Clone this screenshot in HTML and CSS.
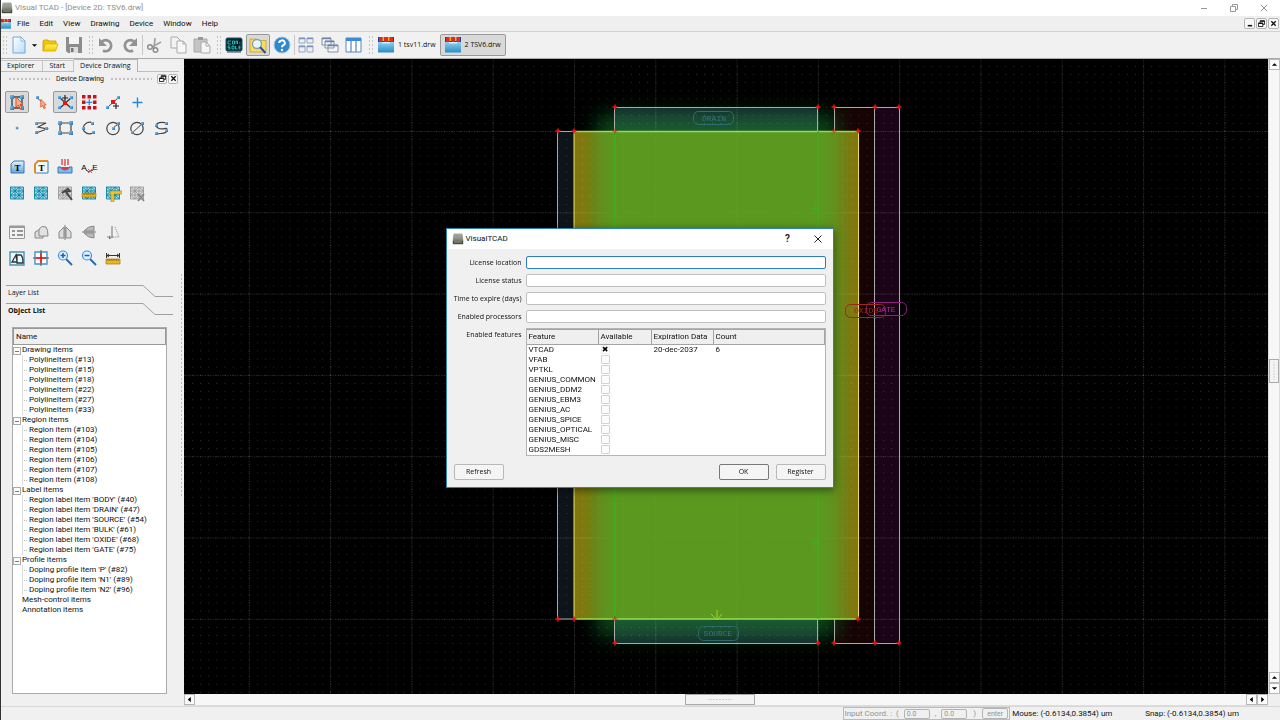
FILE: index.html
```html
<!DOCTYPE html>
<html lang="en">
<head>
<meta charset="utf-8">
<title>Visual TCAD - [Device 2D: TSV6.drw]</title>
<link rel="stylesheet" href="styles.css">
</head>
<body>
<svg class="defs" aria-hidden="true">
  <defs>
    <linearGradient id="gPage" x1="0" y1="0" x2="1" y2="1"><stop offset="0" stop-color="#fff"/><stop offset="1" stop-color="#b9dcf8"/></linearGradient>
    <linearGradient id="gNode" x1="0" y1="0" x2="1" y2="1"><stop offset="0" stop-color="#8cc8ee"/><stop offset="1" stop-color="#1f6fb4"/></linearGradient>
    <linearGradient id="gFolder" x1="0" y1="0" x2="0" y2="1"><stop offset="0" stop-color="#fff35a"/><stop offset="1" stop-color="#f2c800"/></linearGradient>
    <linearGradient id="gBlue" x1="0" y1="0" x2="0" y2="1"><stop offset="0" stop-color="#e6f3fb"/><stop offset="1" stop-color="#5fa3dc"/></linearGradient>
    <linearGradient id="gSea" x1="0" y1="0" x2="0" y2="1"><stop offset="0" stop-color="#8fd0f0"/><stop offset="1" stop-color="#2a8cc8"/></linearGradient>
    <linearGradient id="gApp" x1="0" y1="0" x2="0" y2="1"><stop offset="0" stop-color="#bfc2b8"/><stop offset="1" stop-color="#4e5248"/></linearGradient>
    <symbol id="app" viewBox="0 0 12 12"><path d="M2 1h8l1 7v3H1V8z" fill="url(#gApp)" stroke="#777" stroke-width=".6"/><path d="M3 2.500h6M3 4h6M2.500 5.500h7" stroke="#8d9288" stroke-width=".7"/><path d="M1 8h10v3H1z" fill="#44493f"/><path d="M2 9h8" stroke="#b7c59f" stroke-width=".8"/></symbol>
    <symbol id="dev" viewBox="0 0 16 16"><path d="M0 0h16v6H0z" fill="#2b3c8c"/><path d="M0 5h16v10.500H0z" fill="url(#gSea)"/><path d="M1 0h3.500v5H1zM6 0h4v5H6zM11.500 0H15v5h-3.500z" fill="#e02a1c"/><path d="M4.500 0H6v4H4.500zM10 0h1.500v4H10z" fill="#f8b030"/><path d="M4 5h8v1.500H4z" fill="#c8f0ff"/></symbol>
    <symbol id="new" viewBox="0 0 18 18"><path d="M3 1h8l4 4v12H3z" fill="url(#gPage)" stroke="#6fa8dc"/><path d="M11 1v4h4z" fill="#fff" stroke="#6fa8dc" stroke-width=".8"/></symbol>
    <symbol id="open" viewBox="0 0 18 18"><path d="M2 15V5l1-1h4l1 1h7v3" fill="#f0c800" stroke="#c79a00" stroke-width=".8"/><path d="M2 15 4.500 8H17l-2.500 7z" fill="url(#gFolder)" stroke="#d8aa00" stroke-width=".8"/></symbol>
    <symbol id="save" viewBox="0 0 18 18"><path d="M1 1h16v16H3l-2-2z" fill="#8c8c8c"/><path d="M4 1h10v7H4z" fill="#f4f4f4"/><path d="M5 11h8v6H5z" fill="#ddd"/><path d="M6 12h2.500v4H6z" fill="#777"/></symbol>
    <symbol id="undo" viewBox="0 0 18 18"><path d="M5 5.500a5.500 5.500 0 1 1 1 9" fill="none" stroke="#929292" stroke-width="2.800"/><path d="M2 2v8h8z" fill="#929292"/></symbol>
    <symbol id="redo" viewBox="0 0 18 18"><path d="M13 5.500a5.500 5.500 0 1 0-1 9" fill="none" stroke="#929292" stroke-width="2.800"/><path d="M16 2v8H8z" fill="#929292"/></symbol>
    <symbol id="cut" viewBox="0 0 18 18"><path d="M16 6 7 11M10 2 9 13" stroke="#a4a4a4" stroke-width="1.800"/><circle cx="5" cy="11" r="2.300" fill="none" stroke="#8e8e8e" stroke-width="1.500"/><circle cx="10.500" cy="14" r="2.300" fill="none" stroke="#8e8e8e" stroke-width="1.500"/></symbol>
    <symbol id="copy" viewBox="0 0 18 18"><path d="M2 1h6l3 3v8H2z" fill="#f3f3f3" stroke="#aaa"/><path d="M8 5h6l3 3v9H8z" fill="#f7f7f7" stroke="#aaa"/><path d="M14 5v3h3" fill="none" stroke="#aaa"/></symbol>
    <symbol id="paste" viewBox="0 0 18 18"><path d="M1 3h13v13H1z" fill="#c4c4c4" stroke="#aaa"/><path d="M5 1h5v3H5z" fill="#999"/><path d="M8 6h5l4 4v7H8z" fill="#f5f5f5" stroke="#aaa"/><path d="M13 6v4h4" fill="none" stroke="#aaa"/></symbol>
    <symbol id="console" viewBox="0 0 18 18"><rect x="1" y="2" width="16" height="13" rx="1.500" fill="#081f2b" stroke="#1a5b6b"/><path d="M3 5h3M3 5v3h3M7.500 5h2v3h-2zM11 8V5h1.500v3M14 7h1.500M3 13h2v-1.500H3V10h2M7 10h2v3H7zM10.500 10v3h2M14 13v-3h1.500M14 11.500h1.500M14 13h1.500" fill="none" stroke="#20c8b8" stroke-width=".9"/><path d="M2 16h14" stroke="#3a4a50"/></symbol>
    <symbol id="find" viewBox="0 0 18 18"><path d="M1 3h6l1 1.500h9V16H1z" fill="#f8dc60" stroke="#d0a020" stroke-width=".8"/><circle cx="8" cy="8" r="4.500" fill="#e8f6fc" stroke="#7fa0b0" stroke-width="1.300"/><path d="m11 11 5.500 6" stroke="#2b4f9e" stroke-width="2"/></symbol>
    <symbol id="help" viewBox="0 0 18 18"><circle cx="9" cy="9" r="8" fill="#2f88cc" stroke="#a5c6de"/><path d="M6.200 7a2.800 2.600 0 1 1 3.800 2.400Q9 10 9 11.300" fill="none" stroke="#fff" stroke-width="2"/><circle cx="9" cy="14" r="1.200" fill="#fff"/></symbol>
    <symbol id="tile" viewBox="0 0 18 18"><path d="M2 2h6v5H2zM10 2h6v5h-6zM2 10h6v6H2zM10 10h6v6h-6z" fill="#edf0f5" stroke="#9aa7be"/><path d="M2 2.500h6M10 2.500h6M2 10.500h6M10 10.500h6" stroke="#7d92b8" stroke-width="1.500"/></symbol>
    <symbol id="cascade" viewBox="0 0 18 18"><path d="M1 2h9v7H1zM4 5h9v7H4zM7 9h10v7H7z" fill="#f3f5f8" stroke="#8793a8"/><path d="M1 2.500h9M4 5.500h9M7 9.500h10" stroke="#6f84aa" stroke-width="1.600"/></symbol>
    <symbol id="cols" viewBox="0 0 18 18"><path d="M1 2h15v14H1z" fill="#fff" stroke="#5488bd"/><path d="M1 3.500h15" stroke="#3c8bd8" stroke-width="3"/><path d="M6 5v11M11 5v11" stroke="#5c8fc2" stroke-width="1.300"/></symbol>
    <symbol id="n" viewBox="0 0 4 4"><path d="M0 0h4v4H0z" fill="url(#gNode)"/></symbol>
    <symbol id="cursor" viewBox="0 0 9 12"><path d="m1 0 7 7-3 .3L7 11l-2 1-1.500-4L1 10z" fill="#f7b48c" stroke="#e04a20"/></symbol>
    <symbol id="sel" viewBox="0 0 18 18"><path d="M4 4h10v11H4z" fill="none" stroke="#444" stroke-width="1.400"/><use href="#n" x="2" y="2" width="4" height="4"/><use href="#n" x="12" y="2" width="4" height="4"/><use href="#n" x="2" y="13" width="4" height="4"/><use href="#n" x="12" y="13" width="4" height="4"/><use href="#cursor" x="7" y="4" width="9" height="12"/></symbol>
    <symbol id="pick" viewBox="0 0 18 18"><path d="m5 5 5 4" stroke="#666"/><use href="#n" x="4" y="3" width="3" height="3"/><use href="#cursor" x="8" y="6" width="7" height="10"/></symbol>
    <symbol id="snap" viewBox="0 0 18 18"><path d="M4 15 16 4M3 4l12 11" stroke="#333" stroke-width="1.200"/><use href="#n" x="2" y="3" width="3" height="3"/><use href="#n" x="14" y="3" width="3" height="3"/><use href="#n" x="2" y="13" width="3" height="3"/><use href="#n" x="14" y="13" width="3" height="3"/><path d="M7 8h4v4H7z" fill="#e01818"/><path d="M9 2v6M6 5h6" stroke="#222" stroke-width="1.200"/></symbol>
    <symbol id="array" viewBox="0 0 18 18"><path d="M2 2h3.500v3.500H2zM7.500 2H11v3.500H7.500zM13 2h3.500v3.500H13zM2 7.500h3.500V11H2zM13 7.500h3.500V11H13zM2 13h3.500v3.500H2zM7.500 13H11v3.500H7.500zM13 13h3.500v3.500H13z" fill="#c5141c"/><path d="M9.300 6.300v6M6.300 9.300h6" stroke="#2b8be0" stroke-width="1.300"/></symbol>
    <symbol id="split" viewBox="0 0 18 18"><path d="M4 14 15 4" stroke="#444"/><use href="#n" x="2" y="13" width="3" height="3"/><use href="#n" x="13" y="3" width="3" height="3"/><path d="M7 7h4v4H7z" fill="#e01818"/><path d="M12 10v6M9 13h6" stroke="#222" stroke-width="1.200"/></symbol>
    <symbol id="plus" viewBox="0 0 18 18"><path d="M9.500 4.500v10M4.500 9.500h10" stroke="#2387dc" stroke-width="1.400"/></symbol>
    <symbol id="pt" viewBox="0 0 18 18"><use href="#n" x="7.500" y="7.500" width="3" height="3"/></symbol>
    <symbol id="poly" viewBox="0 0 18 18"><path d="M4 4h10L6 8l9 2-11 4" fill="none" stroke="#444" stroke-width="1.200"/><use href="#n" x="3" y="3" width="3" height="3"/><use href="#n" x="13" y="8" width="3" height="3"/><use href="#n" x="3" y="12" width="3" height="3"/></symbol>
    <symbol id="rect" viewBox="0 0 18 18"><path d="M4 4h11v10H4z" fill="none" stroke="#444" stroke-width="1.200"/><use href="#n" x="2" y="2" width="4" height="4"/><use href="#n" x="13" y="2" width="4" height="4"/><use href="#n" x="2" y="12" width="4" height="4"/><use href="#n" x="13" y="12" width="4" height="4"/></symbol>
    <symbol id="arc" viewBox="0 0 18 18"><path d="M13 4C6 1 0 9 5 13q3 3 8 1" fill="none" stroke="#444" stroke-width="1.200"/><use href="#n" x="11" y="3" width="3" height="3"/><use href="#n" x="12" y="12" width="3" height="3"/><use href="#n" x="2" y="8" width="3" height="3"/></symbol>
    <symbol id="circ" viewBox="0 0 18 18"><circle cx="9" cy="9.500" r="6.200" fill="none" stroke="#444" stroke-width="1.200"/><path d="m9 9 5-4" stroke="#444"/><use href="#n" x="8" y="8" width="3" height="3"/><use href="#n" x="13" y="3" width="3" height="3"/></symbol>
    <symbol id="diam" viewBox="0 0 18 18"><circle cx="9" cy="9.500" r="6.200" fill="none" stroke="#444" stroke-width="1.200"/><path d="M4 14 15 4" stroke="#444"/><use href="#n" x="3" y="12" width="3" height="3"/><use href="#n" x="13" y="3" width="3" height="3"/></symbol>
    <symbol id="spl" viewBox="0 0 18 18"><path d="M15 4C6 2 1 6 6 9s9-2 9 2-5 3-10 4" fill="none" stroke="#444" stroke-width="1.200"/><use href="#n" x="13" y="3" width="3" height="3"/><use href="#n" x="3" y="5" width="3" height="3"/><use href="#n" x="13" y="10" width="3" height="3"/><use href="#n" x="3" y="13" width="3" height="3"/></symbol>
    <symbol id="lab1" viewBox="0 0 18 18"><path d="M6 3h10v12H3V6z" fill="url(#gBlue)" stroke="#3d78b8"/><text x="9.500" y="12.500" class="icon-serif">T</text></symbol>
    <symbol id="lab2" viewBox="0 0 18 18"><path d="M6 3h10v12H3V6z" fill="#f4f8fc" stroke="#3d78b8"/><path d="M3 15V6l3-3h10" fill="none" stroke="#e08a18" stroke-width="1.800"/><text x="9.500" y="12.500" class="icon-serif">T</text></symbol>
    <symbol id="dope" viewBox="0 0 18 18"><path d="M2 9h3c0 4 8 4 8 0h3v6H2z" fill="#7fb9e8" stroke="#3d78b8"/><path d="M5 9h8c0 4-8 4-8 0z" fill="#e8343c"/><path d="M6 1v6M9 1v7M12 1v6" stroke="#d82a30" stroke-width="1.200"/></symbol>
    <symbol id="ab" viewBox="0 0 18 18"><text x="4" y="12" class="icon-sans">A</text><text x="15" y="12" class="icon-sans">E</text><path d="m6 12 3 2 4-2" fill="none" stroke="#333"/><path d="m8 11 4 4m0-4-4 4" stroke="#e05060"/></symbol>
    <symbol id="meshlines" viewBox="0 0 18 18"><path d="M2.500 3h13v12h-13zM2.500 7h13M2.500 11h13M7 3v12M11 3v12M2.500 3l4.500 4L11 3l4.500 4-4.500 4-4-4-4.500 4L7 15l4-4 4.500 4" fill="none" stroke-width=".9"/></symbol>
    <symbol id="mesh" viewBox="0 0 18 18"><path d="M2 3h14v12H2z" fill="#a9dcec"/><use href="#meshlines" stroke="#0b83a5"/></symbol>
    <symbol id="meshg" viewBox="0 0 18 18"><path d="M2 3h14v12H2z" fill="#ddd"/><use href="#meshlines" stroke="#999"/></symbol>
    <symbol id="meshpen" viewBox="0 0 18 18"><use href="#meshg"/><path d="m6 9 6-4 2 2-4 1 6 8" fill="none" stroke="#444" stroke-width="1.800"/></symbol>
    <symbol id="meshrule" viewBox="0 0 18 18"><use href="#mesh"/><path d="M2 9h14v4H2z" fill="#e3b51c" stroke="#a07a10" stroke-width=".6"/><path d="M4 9v2m2-2v2m2-2v2m2-2v2m2-2v2m2-2v2" stroke="#6b5208" stroke-width=".7"/></symbol>
    <symbol id="meshang" viewBox="0 0 18 18"><use href="#mesh"/><path d="M6 7h12v3h-8v8H7v-8H6z" fill="#f0c428" stroke="#b08a10" stroke-width=".6"/></symbol>
    <symbol id="meshx" viewBox="0 0 18 18"><use href="#meshg"/><path d="m10 10 6 7m0-7-6 7" stroke="#888" stroke-width="1.800"/></symbol>
    <symbol id="props" viewBox="0 0 18 18"><path d="M1.500 3h15v12.500h-15z" fill="#f2f2f2" stroke="#999"/><path d="M1.500 4h15" stroke="#999" stroke-width="2"/><path d="M4 8h3M4 12h3M9 8h6M9 12h6" stroke="#777" stroke-width="1.300"/></symbol>
    <symbol id="union" viewBox="0 0 18 18"><path d="M3 9 7 7h4v8H3z" fill="#ddd" stroke="#888"/><path d="M7 6q3-4 7-2 2 2 2 9H7z" fill="#e2e2e2" stroke="#888"/></symbol>
    <symbol id="mirh" viewBox="0 0 18 18"><path d="M8 4v11H3V9zM10 4v11h5V9z" fill="#ddd" stroke="#888"/><path d="M9 2v15" stroke="#777"/></symbol>
    <symbol id="mirv" viewBox="0 0 18 18"><path d="M14 8H4q4-5 10-5zM14 10H4q4 5 10 5z" fill="#bbb" stroke="#888"/><path d="M2 9h14" stroke="#777"/></symbol>
    <symbol id="rot" viewBox="0 0 18 18"><path d="M8 3v12M3 14h6" stroke="#888" stroke-width="1.200"/><path d="m11 4 4 10H9" fill="none" stroke="#888" stroke-dasharray="1 1"/><path d="M5 12v4h2z" fill="#777"/></symbol>
    <symbol id="fit" viewBox="0 0 18 18"><path d="M2 3h14v13H2z" fill="#eef6fa" stroke="#4593b8" stroke-width="1.400"/><path d="M4 13h5L8 6zM9 6h4q2 2 2 8H9z" fill="none" stroke="#333" stroke-width="1.300"/></symbol>
    <symbol id="center" viewBox="0 0 18 18"><path d="M3 3h12v12H3z" fill="#fff" stroke="#4593c8" stroke-width="1.400"/><path d="M9 1v16M1 9h16" stroke="#4a5560"/><path d="M9 4v10M4 9h10" stroke="#e01818" stroke-width="1.500"/></symbol>
    <symbol id="zin" viewBox="0 0 18 18"><path d="m10 10 6 6" stroke="#2d6aa8" stroke-width="2"/><circle cx="7" cy="6.500" r="4.500" fill="#dff0ff" stroke="#3a90dc" stroke-width="1.200"/><path d="M7 4v5M4.500 6.500h5" stroke="#145fc0" stroke-width="1.500"/></symbol>
    <symbol id="zout" viewBox="0 0 18 18"><path d="m10 10 6 6" stroke="#2d6aa8" stroke-width="2"/><circle cx="7" cy="6.500" r="4.500" fill="#dff0ff" stroke="#3a90dc" stroke-width="1.200"/><path d="M4.500 6.500h5" stroke="#145fc0" stroke-width="1.500"/></symbol>
    <symbol id="ruler" viewBox="0 0 18 18"><path d="M2 10h14v5H2z" fill="#e8b820" stroke="#a07a10" stroke-width=".7"/><path d="M4 10v2m2-2v2m2-2v2m2-2v2m2-2v2m2-2v2" stroke="#6b5208" stroke-width=".7"/><path d="M2.500 4v5M15.500 4v5M3 6.500h12M5 5 3 6.500 5 8M13 5l2 1.500L13 8" fill="none" stroke="#333"/></symbol>
    <symbol id="x" viewBox="0 0 8 8"><path d="m1.500 1.500 5 5m0-5-5 5" stroke="currentColor" stroke-width="1.500"/></symbol>
    <symbol id="restore" viewBox="0 0 8 8"><path d="M2.500 3V1h5v4h-2M.500 3.500h5v4h-5z" fill="none" stroke="currentColor"/><path d="M2.500 1.300h5M.500 3.800h5" stroke="currentColor" stroke-width="1.300"/></symbol>
    <symbol id="min" viewBox="0 0 8 8"><path d="M2 6.500h5" stroke="currentColor" stroke-width="1.800"/></symbol>
    <symbol id="au" viewBox="0 0 8 8"><path d="m4 2.500 3 3H1z"/></symbol>
    <symbol id="ad" viewBox="0 0 8 8"><path d="m4 5.500 3-3H1z"/></symbol>
    <symbol id="al" viewBox="0 0 8 8"><path d="m2 4 3.500-3v6z"/></symbol>
    <symbol id="ar" viewBox="0 0 8 8"><path d="M6 4 2.500 1v6z"/></symbol>
  </defs>
</svg>
<div class="app">
  <header class="titlebar">
    <svg class="i12"><use href="#app"/></svg><h1>Visual TCAD - [Device 2D: TSV6.drw]</h1>
    <div class="winctl">
      <button aria-label="Minimize"><svg viewBox="0 0 8 8"><path d="M1 4.500h6" stroke="#999" fill="none"/></svg></button>
      <button aria-label="Restore"><svg viewBox="0 0 8 8"><path d="M2.500 2.500v-2h5v5h-2M.500 2.500h5v5h-5z" stroke="#999" fill="none"/></svg></button>
      <button aria-label="Close"><svg viewBox="0 0 8 8"><path d="m1 1 6 6m0-6L1 7" stroke="#999" fill="none"/></svg></button>
    </div>
  </header>
  <nav class="menubar">
    <svg class="i12"><use href="#dev"/></svg>
    <button>File</button><button>Edit</button><button>View</button><button>Drawing</button><button>Device</button><button>Window</button><button>Help</button>
    <div class="mdictl"><button class="tiny" aria-label="Minimize document"><svg><use href="#min"/></svg></button><button class="tiny" aria-label="Restore document"><svg><use href="#restore"/></svg></button><button class="tiny" aria-label="Close document"><svg><use href="#x"/></svg></button></div>
  </nav>
  <div class="toolbar">
    <i class="grip"></i>
    <button class="tb" aria-label="New"><svg><use href="#new"/></svg></button><button class="drop" aria-label="New options"><svg><use href="#ad"/></svg></button><button class="tb" aria-label="Open"><svg><use href="#open"/></svg></button><button class="tb" aria-label="Save"><svg><use href="#save"/></svg></button>
    <i class="grip wide"></i>
    <button class="tb" aria-label="Undo"><svg><use href="#undo"/></svg></button><button class="tb" aria-label="Redo"><svg><use href="#redo"/></svg></button><i class="sep"></i><button class="tb" aria-label="Cut"><svg><use href="#cut"/></svg></button><button class="tb" aria-label="Copy"><svg><use href="#copy"/></svg></button><button class="tb" aria-label="Paste"><svg><use href="#paste"/></svg></button>
    <i class="grip wide"></i>
    <button class="tb" aria-label="Console"><svg><use href="#console"/></svg></button><button class="tb on" aria-label="Explore"><svg><use href="#find"/></svg></button><button class="tb" aria-label="Help"><svg><use href="#help"/></svg></button><i class="sep"></i><button class="tb" aria-label="Tile"><svg><use href="#tile"/></svg></button><button class="tb" aria-label="Cascade"><svg><use href="#cascade"/></svg></button><button class="tb" aria-label="Tabs"><svg><use href="#cols"/></svg></button>
    <i class="grip wide"></i>
    <button class="doc"><svg><use href="#dev"/></svg>1 tsv11.drw</button><button class="doc on"><svg><use href="#dev"/></svg>2 TSV6.drw</button>
  </div>
  <div class="main">
    <aside class="side">
      <div class="tabs"><button>Explorer</button><button>Start</button><button class="cur">Device Drawing</button></div>
      <div class="dock"><i class="dots"></i><span>Device Drawing</span><i class="dots"></i><button class="tiny" aria-label="Float"><svg><use href="#restore"/></svg></button><button class="tiny" aria-label="Close panel"><svg><use href="#x"/></svg></button></div>
      <div class="tools">
        <div class="pal"><button class="on" aria-label="Select"><svg><use href="#sel"/></svg></button><button aria-label="Pick"><svg><use href="#pick"/></svg></button><button class="on" aria-label="Snap"><svg><use href="#snap"/></svg></button><button aria-label="Snap to grid"><svg><use href="#array"/></svg></button><button aria-label="Snap to line"><svg><use href="#split"/></svg></button><button aria-label="Crosshair"><svg><use href="#plus"/></svg></button></div>
        <div class="pal"><button aria-label="Point"><svg><use href="#pt"/></svg></button><button aria-label="Polyline"><svg><use href="#poly"/></svg></button><button aria-label="Rectangle"><svg><use href="#rect"/></svg></button><button aria-label="Arc"><svg><use href="#arc"/></svg></button><button aria-label="Circle by radius"><svg><use href="#circ"/></svg></button><button aria-label="Circle by diameter"><svg><use href="#diam"/></svg></button><button aria-label="Spline"><svg><use href="#spl"/></svg></button></div>
        <div class="pal gap"><button aria-label="Region label"><svg><use href="#lab1"/></svg></button><button aria-label="Boundary label"><svg><use href="#lab2"/></svg></button><button aria-label="Doping"><svg><use href="#dope"/></svg></button><button aria-label="Mole fraction"><svg><use href="#ab"/></svg></button></div>
        <div class="pal"><button aria-label="Mesh"><svg><use href="#mesh"/></svg></button><button aria-label="Refine mesh"><svg><use href="#mesh"/></svg></button><button aria-label="Edit mesh"><svg><use href="#meshpen"/></svg></button><button aria-label="Mesh size"><svg><use href="#meshrule"/></svg></button><button aria-label="Mesh quality"><svg><use href="#meshang"/></svg></button><button aria-label="Delete mesh"><svg><use href="#meshx"/></svg></button></div>
        <div class="pal gap"><button aria-label="Properties"><svg><use href="#props"/></svg></button><button aria-label="Union"><svg><use href="#union"/></svg></button><button aria-label="Mirror horizontally"><svg><use href="#mirh"/></svg></button><button aria-label="Mirror vertically"><svg><use href="#mirv"/></svg></button><button aria-label="Rotate"><svg><use href="#rot"/></svg></button></div>
        <div class="pal"><button aria-label="Zoom to fit"><svg><use href="#fit"/></svg></button><button aria-label="Center"><svg><use href="#center"/></svg></button><button aria-label="Zoom in"><svg><use href="#zin"/></svg></button><button aria-label="Zoom out"><svg><use href="#zout"/></svg></button><button aria-label="Measure"><svg><use href="#ruler"/></svg></button></div>
      </div>
      <button class="fold"><svg viewBox="0 0 167 14"><path d="M0 1.500h137l12 11h18"/></svg><span>Layer List</span></button>
      <button class="fold cur"><svg viewBox="0 0 167 14"><path d="M0 1.500h137l12 11h18"/></svg><span>Object List</span></button>
      <div class="tree">
        <div class="treehead">Name</div>
        <ul>
          <li class="open">Drawing items<ul><li>PolylineItem (#13)</li><li>PolylineItem (#15)</li><li>PolylineItem (#18)</li><li>PolylineItem (#22)</li><li>PolylineItem (#27)</li><li>PolylineItem (#33)</li></ul></li>
          <li class="open">Region items<ul><li>Region item (#103)</li><li>Region item (#104)</li><li>Region item (#105)</li><li>Region item (#106)</li><li>Region item (#107)</li><li>Region item (#108)</li></ul></li>
          <li class="open">Label items<ul><li>Region label item 'BODY' (#40)</li><li>Region label item 'DRAIN' (#47)</li><li>Region label item 'SOURCE' (#54)</li><li>Region label item 'BULK' (#61)</li><li>Region label item 'OXIDE' (#68)</li><li>Region label item 'GATE' (#75)</li></ul></li>
          <li class="open">Profile items<ul><li>Doping profile item 'P' (#82)</li><li>Doping profile item 'N1' (#89)</li><li>Doping profile item 'N2' (#96)</li></ul></li>
          <li>Mesh-control items</li>
          <li>Annotation items</li>
        </ul>
      </div>
    </aside>
    <div class="splitter"></div>
    <div class="view">
      <svg class="canvas" viewBox="184 59 1084 635" preserveAspectRatio="xMinYMin slice">
        <defs>
          <pattern id="minor" patternUnits="userSpaceOnUse" x="574" y="131" width="8.130" height="8.130"><path d="M0 0h1v1H0z" fill="#fff" fill-opacity=".19"/></pattern>
          <pattern id="major" patternUnits="userSpaceOnUse" x="574" y="131" width="81.300" height="81.300"><path d="M.500 0v81.300M0 .500h81.300" stroke="#fff" stroke-opacity=".2" stroke-dasharray="1 1.500" fill="none"/></pattern>
          <filter id="soft" x="-20%" y="-10%" width="140%" height="120%"><feGaussianBlur stdDeviation="10"/></filter>
          <clipPath id="body"><path d="M574 131h284v488H574z"/></clipPath>
          <path id="k" d="M-2.500 0h5M0-2.500v5" stroke="#e81414" stroke-width="1.500"/>
        </defs>
        <path d="M184 59h1084v635H184z"/>
        <path d="M558 131h16v488h-16z" fill="#0d151b"/>
        <path d="M574 131h284v488H574z" fill="#84760f"/>
        <path d="M615 107h203v24H615zM615 619h203v24H615z" fill="#18262c"/>
        <path d="M834 107h41v536h-41V619h24V131h-24z" fill="#160303"/>
        <path d="M875 107h24v536h-24z" fill="#1b0418"/>
        <rect x="597" y="115" width="240" height="521" fill="#20a83c" fill-opacity=".42" filter="url(#soft)"/>
        <path d="M184 59h1084v635H184z" fill="url(#minor)"/>
        <path d="M184 59h1084v635H184z" fill="url(#major)"/>
        <g clip-path="url(#body)"><rect x="600" y="90" width="238" height="570" fill="#5c9b1e" fill-opacity=".85" filter="url(#soft)"/></g>
        <g fill="none">
          <path d="M558 131.500h16M557.500 131v488h16M614.500 131v-23.500h203V131M614.500 619v24.500h203V619M834.500 131v-23.500h65v536h-65V619M874.500 107v536" stroke="#a7aaa7"/>
          <path d="M574 131v488M858.500 131v488" stroke="#e6dc58"/>
          <path d="M574 131.500h284M574 619h284" stroke="#9adc48" stroke-width="1.300"/>
          <path d="M614.500 131v488M818 131v488" stroke="#42ac1c" stroke-width="1.300"/>
          <path d="M811 209h7m-5-4 5 4-5 4M811 543h7m-5-4 5 4-5 4" stroke="#34b428"/>
          <path d="M717 610v10m-6-6 6 6 5-6" stroke="#a3d422"/>
        </g>
        <use href="#k" x="558" y="131"/><use href="#k" x="574" y="131"/><use href="#k" x="858" y="131"/>
        <use href="#k" x="615" y="107"/><use href="#k" x="818" y="107"/><use href="#k" x="834" y="107"/><use href="#k" x="875" y="107"/><use href="#k" x="899" y="107"/>
        <use href="#k" x="558" y="619"/><use href="#k" x="574" y="619"/><use href="#k" x="858" y="619"/>
        <use href="#k" x="615" y="643"/><use href="#k" x="818" y="643"/><use href="#k" x="834" y="643"/><use href="#k" x="875" y="643"/><use href="#k" x="899" y="643"/>
        <g opacity=".6"><use href="#k" x="615" y="131"/><use href="#k" x="834" y="131"/><use href="#k" x="615" y="619"/></g>
        <g fill="none">
          <rect x="693.500" y="111.500" width="40" height="13" rx="5" stroke="#2d7070"/>
          <rect x="698.500" y="626.500" width="40" height="14" rx="5" stroke="#2d6a68"/>
          <rect x="845.500" y="304.500" width="40" height="13" rx="5" stroke="#98281c"/>
          <rect x="866.500" y="302.500" width="40" height="13" rx="5" stroke="#8c2080"/>
        </g>
        <text class="tag" x="714" y="121" fill="#35787c">DRAIN</text>
        <text class="tag" x="718" y="636" fill="#35787c">SOURCE</text>
        <text class="tag" x="866" y="313" fill="#98281c">OXIDE</text>
        <text class="tag" x="886" y="312" fill="#b024a0">GATE</text>
      </svg>
      <div class="vbar"><button aria-label="Scroll up"><svg><use href="#au"/></svg></button><span class="above"></span><span class="thumb"></span><span class="below"></span><button aria-label="Page up"><svg><use href="#au"/></svg></button><button aria-label="Scroll down"><svg><use href="#ad"/></svg></button></div>
      <div class="hbar"><button aria-label="Scroll left"><svg><use href="#al"/></svg></button><span class="above"></span><span class="thumb"></span><span class="below"></span><button aria-label="Page left"><svg><use href="#al"/></svg></button><button aria-label="Scroll right"><svg><use href="#ar"/></svg></button></div>
      <div class="corner"></div>
    </div>
  </div>
  <footer class="status">
    <form class="coord"><label for="cx">Input Coord. :&nbsp; (</label><input id="cx" value="0.0" disabled><label for="cy">,</label><input id="cy" value="0.0" disabled><span>)</span><button type="button" disabled>enter</button></form>
    <span class="mouse">Mouse: (-0.6134,0.3854) um</span><span class="snap">Snap: (-0.6134,0.3854) um</span>
  </footer>
</div>
<div class="overlay">
  <div class="dialog" role="dialog" aria-labelledby="dt">
    <div class="dtitle"><svg class="i12"><use href="#app"/></svg><h2 id="dt">VisualTCAD</h2><button aria-label="Help">?</button><button aria-label="Close"><svg viewBox="0 0 8 8"><path d="m.5.5 7 7m0-7-7 7" stroke="#222" fill="none"/></svg></button></div>
    <div class="form">
      <label for="f1">License location</label><input id="f1" class="focus">
      <label for="f2">License status</label><input id="f2">
      <label for="f3">Time to expire (days)</label><input id="f3">
      <label for="f4">Enabled processors</label><input id="f4">
      <span id="fl" class="fl">Enabled features</span>
      <div class="tablebox">
        <table aria-labelledby="fl">
          <thead><tr><th class="c1">Feature</th><th class="c2">Available</th><th class="c3">Expiration Data</th><th>Count</th></tr></thead>
          <tbody>
            <tr><td>VTCAD</td><td><input type="checkbox" aria-label="VTCAD" checked></td><td>20-dec-2037</td><td>6</td></tr>
            <tr><td>VFAB</td><td><input type="checkbox" aria-label="VFAB"></td><td></td><td></td></tr>
            <tr><td>VPTKL</td><td><input type="checkbox" aria-label="VPTKL"></td><td></td><td></td></tr>
            <tr><td>GENIUS_COMMON</td><td><input type="checkbox" aria-label="GENIUS_COMMON"></td><td></td><td></td></tr>
            <tr><td>GENIUS_DDM2</td><td><input type="checkbox" aria-label="GENIUS_DDM2"></td><td></td><td></td></tr>
            <tr><td>GENIUS_EBM3</td><td><input type="checkbox" aria-label="GENIUS_EBM3"></td><td></td><td></td></tr>
            <tr><td>GENIUS_AC</td><td><input type="checkbox" aria-label="GENIUS_AC"></td><td></td><td></td></tr>
            <tr><td>GENIUS_SPICE</td><td><input type="checkbox" aria-label="GENIUS_SPICE"></td><td></td><td></td></tr>
            <tr><td>GENIUS_OPTICAL</td><td><input type="checkbox" aria-label="GENIUS_OPTICAL"></td><td></td><td></td></tr>
            <tr><td>GENIUS_MISC</td><td><input type="checkbox" aria-label="GENIUS_MISC"></td><td></td><td></td></tr>
            <tr><td>GDS2MESH</td><td><input type="checkbox" aria-label="GDS2MESH"></td><td></td><td></td></tr>
          </tbody>
        </table>
      </div>
    </div>
    <div class="actions"><button>Refresh</button><button class="ok">OK</button><button>Register</button></div>
  </div>
</div>
</body>
</html>
```
FILE: styles.css
```css
* { box-sizing: border-box; }
body { margin: 0; font: 8px/10px Roboto, "Noto Sans", sans-serif; color: #111; background: #f0f0f0; }
button, input { font: inherit; color: inherit; margin: 0; padding: 0; border: 0; background: none; }
h1, h2 { margin: 0; font: inherit; }
ul { margin: 0; padding: 0; list-style: none; }
svg { display: block; }
.defs { position: absolute; width: 0; height: 0; }
.icon-serif { font: bold 9px "Liberation Serif", serif; text-anchor: middle; }
.icon-sans { font: 8px "Liberation Sans", sans-serif; text-anchor: middle; }
.i12 { width: 12px; height: 12px; flex: none; }
.doc, .tabs, .fold, .form > label, .fl, .actions button { font-family: "Open Sans", "Noto Sans", sans-serif; font-size: 7px; }
.app { display: flex; flex-direction: column; height: 100vh; overflow: hidden; border-left: 1px solid #333; }

.titlebar { display: flex; align-items: center; height: 16px; gap: 2px; background: #fff; color: #8c8c8c; }
.winctl { display: flex; margin-left: auto; gap: 14px; padding-right: 8px; }
.winctl button { width: 16px; height: 16px; display: grid; place-items: center; }
.winctl svg { width: 8px; height: 8px; }

.menubar { display: flex; align-items: center; height: 16px; gap: 10px; border-bottom: 1px solid #d2d2d2; background: #efefef; }
.menubar > svg { margin-right: -4px; width: 10px; }
.mdictl { display: flex; gap: 1px; margin-left: auto; padding-right: 1px; }
.tiny { width: 11px; height: 11px; display: grid; place-items: center; border: 1px solid #b4b4b4; border-radius: 2px; background: #f8f8f8; color: #111; flex: none; }
.tiny svg { width: 7px; height: 7px; }

.toolbar { display: flex; align-items: center; height: 27px; padding-left: 1px; border-bottom: 1px solid #aaa; background: #f1f1f1; flex: none; }
.grip { width: 5px; height: 20px; flex: none; background: radial-gradient(circle, #c4c4c4 1px, transparent 1px) 0 0 / 3px 4px; }
.grip.wide { margin: 0 1px 0 2px; }
.sep { width: 1px; height: 20px; margin-right: -1px; background: #c8c8c8; flex: none; }
.tb { width: 24px; height: 22px; display: grid; place-items: center; flex: none; }
.tb svg { width: 18px; height: 18px; }
.drop { width: 7px; height: 20px; }
.drop svg { width: 7px; height: 7px; }
.on { border: 1px solid #999; border-radius: 2px; background: #d9d9d9; }
.doc { display: flex; align-items: center; gap: 4px; height: 22px; padding: 0 4px; border-radius: 2px; }
.doc svg { width: 16px; height: 16px; }

.main { flex: 1; min-height: 0; display: grid; grid-template-columns: 178px 5px 1fr; }
.side { display: flex; flex-direction: column; min-height: 0; }
.tabs { display: flex; height: 13px; align-items: flex-end; border-bottom: 1px solid #bdbdbd; }
.tabs button { height: 11px; padding: 0 8px 0 6px; border: 1px solid #c6c6c6; border-width: 1px 1px 0 0; }
.tabs .cur { height: 13px; padding: 0 6px; margin-bottom: -1px; background: #f0f0f0; border-color: #b4b4b4; }
.dock { display: flex; align-items: center; height: 13px; gap: 2px; padding: 0 1px 0 3px; font-size: 7px; }
.dots { flex: 1; height: 4px; margin: 0 4px; background: radial-gradient(circle, #c2c2c2 1px, transparent 1px) 0 0 / 4px 4px; }
.dock .tiny { width: 10px; height: 10px; margin-left: -1px; }
.tools { padding: 4px 0 0 4px; }
.pal { display: flex; height: 26px; align-items: center; }
.pal.gap { margin-top: 13px; }
.pal button { width: 24px; height: 22px; display: grid; place-items: center; }
.pal svg { width: 18px; height: 18px; }
.fold { position: relative; display: block; height: 18px; margin-left: 5px; text-align: left; flex: none; }
.fold svg { position: absolute; inset: 0 auto auto 0; width: 167px; height: 14px; }
.fold path { fill: none; stroke: #a0a0a0; }
.fold span { padding-left: 2px; }
.fold.cur { font-weight: bold; }
.tools + .fold { margin-top: 13px; }
.tree { flex: 1; min-height: 0; margin: 7px 12px 12px 11px; border: 1px solid #aaa; background: #fff; }
.treehead { height: 17px; padding: 2px; border: 1px solid #999; background: #efefef; line-height: 12px; }
.tree > ul > li { position: relative; padding-left: 9px; line-height: 10px; }
.tree li li { padding-left: 6px; position: relative; }
.tree li li::before { content: ""; position: absolute; left: 1px; top: 0; width: 3px; height: 5px; border-bottom: 1px dotted #bbb; }
.tree li ul { border-left: 1px solid #ddd; }
.open::before { content: ""; position: absolute; left: 0; top: 2px; width: 6px; height: 6px; border: 1px solid #aaa; background: linear-gradient(#777, #777) center / 4px 1px no-repeat, #fff; }
.splitter { margin: 214px 1px 208px; background: radial-gradient(circle, #bbb 1px, transparent 1px) 0 0 / 3px 4px; }

.view { display: grid; grid-template: 1fr 12px / 1fr 12px; min-width: 0; min-height: 0; background: #f4f4f4; }
.canvas { width: 100%; height: 100%; min-height: 0; background: #000; }
.tag { font: 8px "Liberation Mono", monospace; text-anchor: middle; }
.vbar, .hbar { display: flex; background: #f7f7f7; border: 1px solid #ddd; min-width: 0; min-height: 0; }
.vbar { flex-direction: column; border-width: 0 1px; }
.hbar { border-width: 0 0 1px; }
.vbar button, .hbar button { width: 11px; height: 11px; border: 1px solid #b8b8b8; background: #fbfbfb; display: grid; place-items: center; flex: none; }
.vbar button svg, .hbar button svg { width: 7px; height: 7px; }
.vbar .above { flex: 290; }
.vbar .below { flex: 290; }
.hbar .above { flex: 490; }
.hbar .below { flex: 492; }
.thumb { border: 1px solid #aaa; flex: none; background: radial-gradient(circle, #aaa 1px, transparent 1px) center / 3px 3px content-box, #f3f3f3; padding: 2px; }
.vbar .thumb { height: 24px; }
.hbar .thumb { width: 70px; padding: 2px 22px; }
.corner { background: #efefef; }

.status { display: flex; align-items: center; height: 14px; padding-right: 41px; background: #f0f0f0; flex: none; border-top: 1px solid #d8d8d8; }
.coord { margin-left: auto; display: flex; align-items: center; gap: 5px; height: 13px; padding-right: 1px; border: 1px solid #bbb; color: #929292; }
.coord input { width: 26px; height: 10px; padding-left: 2px; border: 1px solid #b4b4b4; border-radius: 2px; font-size: 7px; }
.coord span { margin: 0 1px; }
.coord button { width: 26px; height: 11px; border: 1px solid #b4b4b4; border-radius: 2px; font-size: 7px; line-height: 8px; }
.mouse { margin-left: 2px; width: 133px; }

.overlay { position: fixed; inset: 0; display: grid; place-items: center; padding: 0 1px 5px 0; }
.dialog { width: 388px; background: #f0f0f0; border: 1px solid #2b83b0; box-shadow: 0 2px 8px rgba(0, 0, 0, .5); }
.dtitle { display: flex; align-items: center; height: 20px; padding: 0 7px 0 5px; background: #fff; gap: 2px; }
.dtitle h2 { flex: 1; }
.dtitle button { width: 16px; height: 16px; margin-left: 12px; display: grid; place-items: center; font-size: 10px; font-weight: 600; }
.dtitle button svg { width: 8px; height: 8px; }
.form { display: grid; grid-template-columns: 68px 1fr; gap: 5px 4px; padding: 7px 7px 0; }
.form > label, .fl { text-align: right; line-height: 13px; white-space: nowrap; }
.form > input { height: 13px; min-width: 0; border: 1px solid #c0c0c0; border-radius: 2px; background: #fff; padding: 0 2px; }
.form > .focus { border-color: #2b7ec4; }
.tablebox { height: 128px; border: 1px solid #b4b4b4; background: #fff; }
table { width: 100%; border-collapse: separate; border-spacing: 0; table-layout: fixed; }
th { height: 16px; padding: 0 2px; text-align: left; font-weight: normal; white-space: nowrap; border: 1px solid #a4a4a4; border-left: 0; background: #efefef; }
.c1 { width: 72px; }
.c2 { width: 53px; }
.c3 { width: 62px; }
td { height: 10px; padding: 0 2px; line-height: 10px; white-space: nowrap; }
td input { display: grid; place-items: center; appearance: none; width: 9px; height: 9px; border: 1px solid #d2d2d2; border-radius: 1px; background: #fcfcfc; }
td input:checked { border-color: #eee; }
td input:checked::after { content: "✖"; font: 8px/8px "DejaVu Sans", sans-serif; color: #000; }
.actions { display: flex; gap: 7px; padding: 8px 7px 7px; }
.actions button { width: 50px; height: 16px; border: 1px solid #b8b8b8; border-radius: 2px; background: #f5f5f5; }
.actions .ok { margin-left: auto; border-color: #777; }
```
